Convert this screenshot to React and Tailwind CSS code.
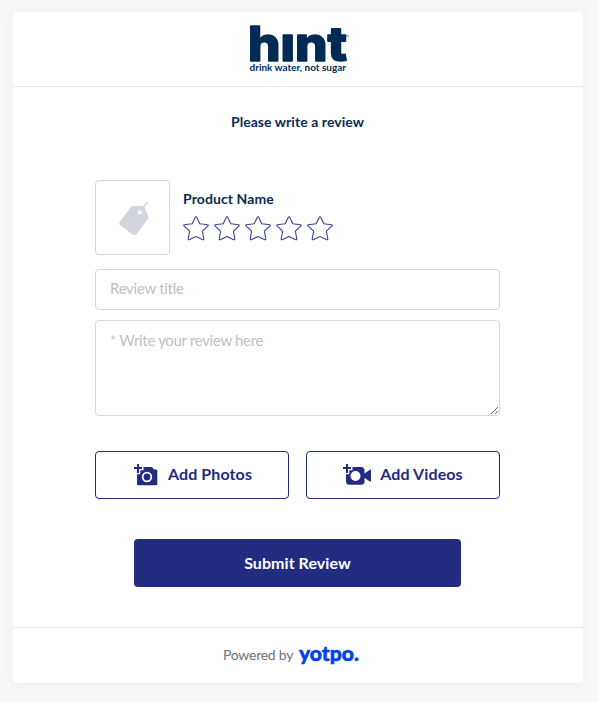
import React from "react";

function HintLogo() {
  return (
    <svg width="100" height="54" viewBox="0 0 100 54" fill="#002b55" className="overflow-visible" aria-label="hint">
      <text x="-1" y="36.8" fontFamily="Inter, sans-serif" fontWeight="800" fontSize="48" textLength="99" lengthAdjust="spacingAndGlyphs" stroke="#002b55" strokeWidth="1.6" strokeLinejoin="round">hınt</text>
      <text x="0.5" y="47.2" fontFamily="Lato, sans-serif" fontWeight="700" fontSize="9" textLength="96.5" lengthAdjust="spacingAndGlyphs">drink water, not sugar</text>
      <circle cx="98.5" cy="12" r="0.9" fill="none" stroke="#002b55" strokeWidth="0.4" />
    </svg>
  );
}

function Star() {
  return (
    <svg width="27" height="26" viewBox="0 0 27 26" fill="none" stroke="#3c4295" strokeWidth="1.1" strokeLinejoin="round">
      <path d="M13 1.7 Q13.5 1.7 13.8 2.4 L16.8 8.7 L24.7 9.7 Q25.7 10.1 25 10.8 L19.4 16.2 L20.8 24 Q20.8 25.1 19.8 24.7 L13 21.5 L6.2 24.7 Q5.2 25.1 5.2 24 L6.6 16.2 L1 10.8 Q.3 10.1 1.3 9.7 L9.2 8.7 L12.2 2.4 Q12.5 1.7 13 1.7Z" />
    </svg>
  );
}

function Tag() {
  return (
    <svg width="32" height="36" viewBox="0 0 32 36" className="ml-0.5 mt-[3px]">
      <path d="M14.3 5.2 L24.5 4.8 Q26 4.8 26.7 6.2 L30.2 15.2 Q30.8 16.5 30 17.7 L18.5 33.1 Q17 35 15 33.8 L2.2 24.2 Q.5 22.8 1.7 21 L12.4 6.4 Q13.1 5.3 14.3 5.2Z" fill="#d3d5de" />
      <circle cx="22" cy="11" r="2.3" fill="#fff" />
      <path d="M22.5 10.5 Q24 6 29.4 1.8" fill="none" stroke="#d3d5de" strokeWidth="1.5" strokeLinecap="round" />
    </svg>
  );
}

function CameraIcon() {
  return (
    <svg width="24" height="23" viewBox="0 0 24 23" fill="#232b81" className="mt-px">
      <path d="M3 0h2v3h3v2H5v4H3V5H0V3h3z" />
      <path d="M9.5 3H18l2 2.5h2q1.3 0 1.3 1.3V20q0 1.3-1.3 1.3H4.3Q3 21.3 3 20V10.3h3.3V6.3h3.2z" />
      <circle cx="13" cy="13" r="4.3" fill="none" stroke="#fff" strokeWidth="1.8" />
    </svg>
  );
}

function VideoIcon() {
  return (
    <svg width="29" height="23" viewBox="0 0 29 23" fill="#232b81" className="mt-px">
      <path d="M3 0h2v3h3v2H5v4H3V5H0V3h3z" />
      <path d="M9.5 3H18q3.5 0 3.5 3.5V9.5L27 5.7q1-.4 1 .6V17q0 1-1 .6L21.5 14v3.5q0 3.300-3.500 3.300H6.500Q3 20.800 3 17.500V10.300h3.300V6.300h3.200z" />
      <circle cx="12.5" cy="12" r="5" fill="#fff" />
    </svg>
  );
}

export default function App() {
  return (
    <div className="flex h-[702px] w-[599px] flex-col bg-[#f8f8f8] pt-3 pl-[13px] font-['Lato',sans-serif]">
      <main className="flex h-[671px] w-[570px] flex-col rounded bg-white shadow-[0_2px_10px_rgba(40,50,90,0.05)]">
        <header className="flex h-[75px] shrink-0 justify-center border-b border-[#e7e8ea] pt-3 pl-0.5">
          <HintLogo />
        </header>
        <section className="flex grow flex-col items-center pr-px">
          <h1 className="mt-[25px] h-5 text-[14px] leading-5 font-bold tracking-[0.06px] text-[#0b2b55]">Please write a review</h1>
          <div className="mt-12 flex w-[405px] flex-col">
            <div className="flex gap-3">
              <div className="flex h-[75px] w-[75px] items-center justify-center rounded border border-[#d3d5de]">
                <Tag />
              </div>
              <div className="pt-[9px]">
                <h2 className="ml-px text-[14px] leading-5 font-bold tracking-[0.1px] text-[#0b2b55]">Product Name</h2>
                <div className="mt-[6px] ml-px flex gap-1">
                  <Star /><Star /><Star /><Star /><Star />
                </div>
              </div>
            </div>
            <input placeholder="Review title" className="mt-3.5 h-[41px] rounded border border-[#d3d5de] px-3.5 pb-[3px] text-[15px] tracking-[-0.28px] placeholder:text-[#bfbfbf]" />
            <textarea placeholder="* Write your review here" className="mt-2.5 h-24 resize rounded border border-[#d8d9dc] px-3.5 py-[9px] text-[15px] leading-5 tracking-[-0.32px] placeholder:text-[#bfbfbf]" />
            <div className="mt-[35px] flex gap-[17px]">
              <button className="flex h-12 w-[194px] items-center justify-center gap-2.5 rounded border border-[#232b81] pl-0.5 text-[16px] font-bold text-[#232b81]">
                <CameraIcon /><span className="-mt-0.5 tracking-[0.1px]">Add Photos</span>
              </button>
              <button className="flex h-12 w-[194px] items-center justify-center gap-2 rounded border border-[#232b81] text-[16px] font-bold text-[#232b81]">
                <VideoIcon /><span className="-mt-0.5 tracking-[0.1px]">Add Videos</span>
              </button>
            </div>
            <button className="mt-10 h-12 w-[327px] self-center rounded bg-[#232b81] pb-px text-[16px] font-bold tracking-[0.06px] text-white">Submit Review</button>
          </div>
        </section>
        <footer className="flex h-14 shrink-0 items-center border-t border-[#e7e8ea] pl-[210px] text-[14px] text-[#6d7480]">
          <span className="-mt-0.5 tracking-[-0.25px]">Powered by</span>
          <svg className="ml-[6px] overflow-visible" width="61" height="26" viewBox="0 0 61 26" aria-label="yotpo">
            <text x="0" y="18" fill="#0042e4" stroke="#0042e4" strokeWidth=".5" fontFamily="Lato, sans-serif" fontWeight="900" fontSize="20" textLength="60" lengthAdjust="spacingAndGlyphs">yotpo.</text>
          </svg>
        </footer>
      </main>
    </div>
  );
}
